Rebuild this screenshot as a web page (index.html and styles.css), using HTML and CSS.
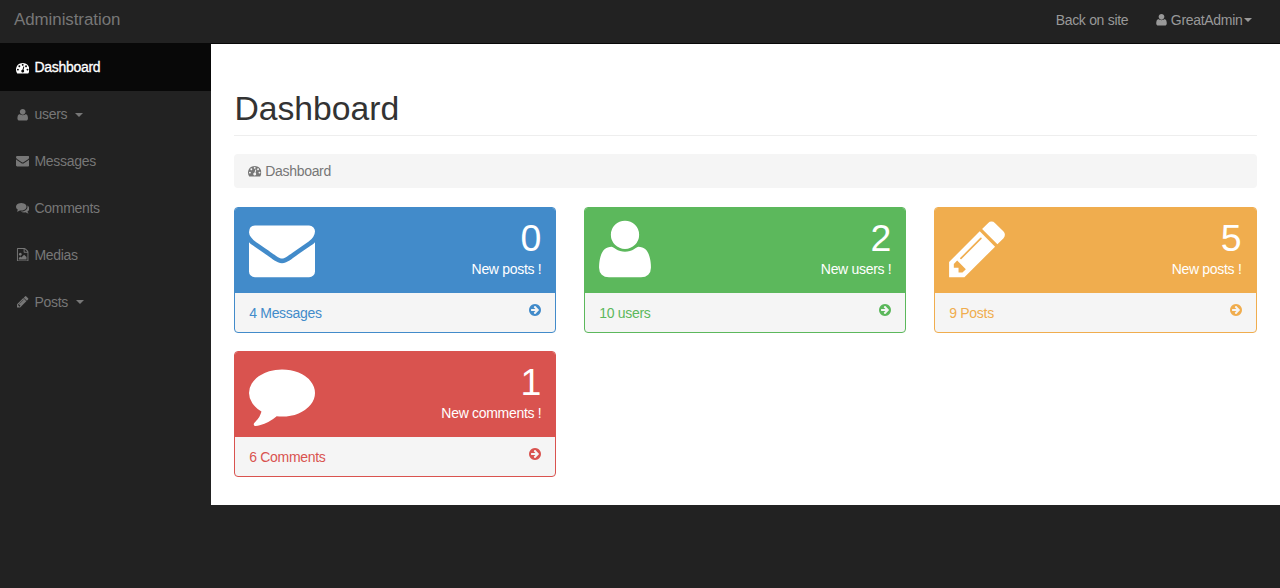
FILE: index.html
```html
<!DOCTYPE html>
<html lang="en">
<head>
<meta charset="utf-8">
<title>Administration</title>
<link rel="stylesheet" href="styles.css">
</head>
<body>
<svg class="sprite" aria-hidden="true">
  <symbol id="dash" viewBox="0 0 1792 1792"><path d="M384 1152q0-53-37.5-90.5t-90.5-37.5-90.5 37.5-37.5 90.5 37.5 90.5 90.5 37.5 90.5-37.5 37.5-90.5zm192-448q0-53-37.5-90.5t-90.5-37.5-90.5 37.5-37.5 90.5 37.5 90.5 90.5 37.5 90.5-37.5 37.5-90.5zm428 481l101-382q6-26-7.5-48.5t-38.5-29.5-48 6.5-30 39.5l-101 382q-60 5-107 43.5t-63 98.5q-20 77 20 146t117 89 146-20 89-117q16-60-6-117t-72-91zm660-33q0-53-37.5-90.5t-90.5-37.5-90.5 37.5-37.5 90.5 37.5 90.5 90.5 37.5 90.5-37.5 37.5-90.5zm-640-640q0-53-37.5-90.5t-90.5-37.5-90.5 37.5-37.5 90.5 37.5 90.5 90.5 37.5 90.5-37.5 37.5-90.5zm448 192q0-53-37.5-90.5t-90.5-37.5-90.5 37.5-37.5 90.5 37.5 90.5 90.5 37.5 90.5-37.5 37.5-90.5zm320 448q0 261-141 483-19 29-54 29h-1402q-35 0-54-29-141-221-141-483 0-182 71-348t191-286 286-191 348-71 348 71 286 191 191 286 71 348z"/></symbol>
  <symbol id="user" viewBox="192 0 1408 1792"><path d="M1600 1405q0 120-73 189.5t-194 69.5h-874q-121 0-194-69.5t-73-189.5q0-53 3.5-103.5t14-109 26.5-108.5 43-97.5 62-81 85.5-53.5 111.5-20q9 0 42 21.5t74.5 48 108 48 133.5 21.5 133.5-21.5 108-48 74.5-48 42-21.5q61 0 111.5 20t85.5 53.5 62 81 43 97.5 26.5 108.5 14 109 3.5 103.5zm-320-893q0 159-112.5 271.5t-271.5 112.5-271.5-112.5-112.5-271.5 112.5-271.5 271.5-112.5 271.5 112.5 112.5 271.5z"/></symbol>
  <symbol id="mail" viewBox="0 0 1792 1792"><path d="M1792 710v794q0 66-47 113t-113 47h-1472q-66 0-113-47t-47-113v-794q44 49 101 87 362 246 497 345 57 42 92.5 65.5t94.5 48 110 24.5h2q51 0 110-24.5t94.5-48 92.5-65.5q170-123 498-345 57-39 100-87zm0-294q0 79-49 151t-122 123q-376 261-468 325-10 7-42.5 31t-54 38.5-52 32.5-57.5 27-50 9h-2q-23 0-50-9t-57.5-27-52-32.5-54-38.5-42.5-31q-91-64-262-182.5t-205-142.5q-62-42-117-115.5t-55-136.5q0-78 41.5-130t118.5-52h1472q65 0 112.5 47t47.5 113z"/></symbol>
  <symbol id="pencil" viewBox="128 0 1515 1792"><path d="M491 1536l91-91-235-235-91 91v107h128v128h107zm523-928q0-22-22-22-10 0-17 7l-542 542q-7 7-7 17 0 22 22 22 10 0 17-7l542-542q7-7 7-17zm-54-192l416 416-832 832h-416v-416zm683 96q0 53-37 90l-166 166-416-416 166-165q36-38 90-38 53 0 91 38l235 234q37 39 37 91z"/></symbol>
  <symbol id="comment" viewBox="0 0 1792 1792"><path d="M1792 896q0 174-120 321.5t-326 233-450 85.5q-70 0-145-8-198 175-460 242-49 14-114 22-17 2-30.5-9t-17.5-29v-1q-3-4-.5-12t2-10 4.5-9.5l6-9 7-8.5 8-9q7-8 31-34.5t34.5-38 31-39.5 32.5-51 27-59 26-76q-157-89-247.5-220t-90.5-281q0-130 71-248.5t191-204.5 286-136.5 348-50.5q244 0 450 85.5t326 233 120 321.5z"/></symbol>
  <symbol id="comments" viewBox="0 0 1792 1792"><path d="M1408 768q0 139-94 257t-256.5 186.5-353.5 68.5q-86 0-176-16-124 88-278 128-36 9-86 16h-3q-11 0-20.5-8t-11.5-21q-1-3-1-6.5t.5-6.5 2-6l2.5-5 3.5-5.5 4-5 4.5-5 4-4.5q5-6 23-25t26-29.5 22.5-29 25-38.5 20.5-44q-124-72-195-177t-71-224q0-139 94-257t256.5-186.5 353.5-68.5 353.5 68.5 256.5 186.5 94 257zm384 256q0 120-71 224.5t-195 176.5q10 24 20.5 44t25 38.5 22.5 29 26 29.5 23 25q1 1 4 4.5t4.5 5 4 5 3.5 5.5l2.5 5 2 6 .5 6.5-1 6.5q-3 14-13 22t-22 7q-50-7-86-16-154-40-278-128-90 16-176 16-271 0-472-132 58 4 88 4 161 0 309-45t264-129q125-92 192-212t67-254q0-77-23-152 129 71 204 178t75 230z"/></symbol>
  <symbol id="image" viewBox="0 0 1792 1792"><path d="M1596 380q28 28 48 76t20 88v1152q0 40-28 68t-68 28h-1344q-40 0-68-28t-28-68v-1600q0-40 28-68t68-28h896q40 0 88 20t76 48zm-444-244v376h376q-10-29-22-41l-313-313q-12-12-41-22zm384 1528v-1024h-416q-40 0-68-28t-28-68v-416h-768v1536h1280zm-128-448v320h-1024v-192l192-192 128 128 384-384zm-832-192q-80 0-136-56t-56-136 56-136 136-56 136 56 56 136-56 136-136 56z"/></symbol>
  <symbol id="arrow" viewBox="128 0 1536 1792"><path d="M1413 896q0-27-18-45l-91-91-362-362q-18-18-45-18t-45 18l-91 91q-18 18-18 45t18 45l189 189h-502q-26 0-45 19t-19 45v128q0 26 19 45t45 19h502l-189 189q-19 19-19 45t19 45l91 91q18 18 45 18t45-18l362-362 91-91q18-18 18-45zm251 0q0 209-103 385.5t-279.5 279.5-385.5 103-385.5-103-279.5-279.5-103-385.5 103-385.5 279.5-279.5 385.5-103 385.5 103 279.5 279.5 103 385.5z"/></symbol>
</svg>

<header class="navbar">
  <a class="brand">Administration</a>
  <nav class="top-links">
    <a>Back on site</a>
    <a class="account"><svg class="icon narrow"><use href="#user"/></svg>GreatAdmin<span class="caret"></span></a>
  </nav>
</header>

<div class="layout">
  <nav class="sidebar">
    <a class="item active"><svg class="icon"><use href="#dash"/></svg>Dashboard</a>
    <a class="item"><svg class="icon"><use href="#user"/></svg>users<span class="caret"></span></a>
    <a class="item"><svg class="icon"><use href="#mail"/></svg>Messages</a>
    <a class="item"><svg class="icon"><use href="#comments"/></svg>Comments</a>
    <a class="item"><svg class="icon"><use href="#image"/></svg>Medias</a>
    <a class="item"><svg class="icon"><use href="#pencil"/></svg>Posts<span class="caret"></span></a>
  </nav>

  <main class="content">
    <h1>Dashboard</h1>
    <div class="breadcrumb"><svg class="icon"><use href="#dash"/></svg>Dashboard</div>
    <div class="cards">
      <section class="card blue">
        <div class="card-head"><svg class="big wide"><use href="#mail"/></svg><div class="stat"><div class="number">0</div><div>New posts !</div></div></div>
        <a class="card-foot"><span>4 Messages</span><svg class="arrow"><use href="#arrow"/></svg></a>
      </section>
      <section class="card green">
        <div class="card-head"><svg class="big person"><use href="#user"/></svg><div class="stat"><div class="number">2</div><div>New users !</div></div></div>
        <a class="card-foot"><span>10 users</span><svg class="arrow"><use href="#arrow"/></svg></a>
      </section>
      <section class="card orange">
        <div class="card-head"><svg class="big pen"><use href="#pencil"/></svg><div class="stat"><div class="number">5</div><div>New posts !</div></div></div>
        <a class="card-foot"><span>9 Posts</span><svg class="arrow"><use href="#arrow"/></svg></a>
      </section>
      <section class="card red">
        <div class="card-head"><svg class="big wide"><use href="#comment"/></svg><div class="stat"><div class="number">1</div><div>New comments !</div></div></div>
        <a class="card-foot"><span>6 Comments</span><svg class="arrow"><use href="#arrow"/></svg></a>
      </section>
    </div>
  </main>
</div>
</body>
</html>
```
FILE: styles.css
```css
* { box-sizing: border-box; }
body {
  margin: 0;
  height: 588px;
  overflow: hidden;
  background: #222;
  color: #333;
  font: 14px/19px "Liberation Sans", Arial, sans-serif;
  letter-spacing: -0.3px;
}
.sprite { display: none; }
svg { fill: currentColor; flex: none; }

.navbar {
  height: 44px;
  display: flex;
  justify-content: space-between;
  align-items: center;
  padding: 0 28px 4px 14px;
  border-bottom: 1px solid #080808;
}
.brand { color: #777; font-size: 16.9px; letter-spacing: -0.05px; }
.top-links { display: flex; gap: 28px; padding-top: 1px; color: #999; }
.account { display: flex; align-items: center; }
.icon { width: 13.4px; height: 13.4px; }
.icon.narrow { width: 11px; margin-right: 3.5px; }
.caret {
  border: 4px solid transparent;
  border-top-color: currentColor;
  border-bottom: 0;
  margin-left: 1.5px;
}

.layout { display: flex; align-items: flex-start; }
.sidebar { width: 211px; color: #777; }
.item {
  display: flex;
  align-items: center;
  height: 46.85px;
  padding: 1px 0 0 15.7px;
}
.item .icon { margin-right: 5.4px; margin-bottom: 1px; }
.item .caret { margin-left: 8px; }
.item.active {
  background: #080808;
  color: #fff;
  -webkit-text-stroke: 0.3px #fff;
}

.content {
  flex: 1;
  height: 460.5px;
  background: #fff;
  padding: 43px 23.5px 0 23.4px;
}
h1 {
  margin: 0 0 18px;
  height: 49px;
  font-size: 33.7px;
  line-height: 42px;
  font-weight: 400;
  letter-spacing: 0;
  border-bottom: 1px solid #eee;
}
.breadcrumb {
  display: flex;
  align-items: center;
  height: 34px;
  margin-bottom: 19px;
  padding-left: 14px;
  border-radius: 4px;
  background: #f5f5f5;
  color: #777;
}
.breadcrumb .icon { margin-right: 3.4px; }

.cards {
  display: grid;
  grid-template-columns: repeat(3, 1fr);
  gap: 18.5px 28px;
}
.card {
  height: 125.5px;
  border: 1px solid var(--tone);
  border-radius: 4px;
  background: #f5f5f5;
  overflow: hidden;
}
.blue { --tone: #428bca; }
.green { --tone: #5cb85c; }
.orange { --tone: #f0ad4e; }
.red { --tone: #d9534f; }
.card-head {
  display: flex;
  justify-content: space-between;
  height: 85px;
  padding: 8px 14px 0 13.6px;
  background: var(--tone);
  color: #fff;
}
.big { height: 66px; }
.wide { width: 66px; }
.person { width: 52px; }
.pen { width: 56px; }
.stat { text-align: right; padding-top: 0.5px; }
.number { font-size: 37.5px; line-height: 43px; height: 43px; letter-spacing: 0; }
.card-foot {
  display: flex;
  justify-content: space-between;
  padding: 10.5px 14px 0 13.8px;
  color: var(--tone);
}
.arrow { width: 12px; height: 14px; margin-top: -0.5px; }
```
